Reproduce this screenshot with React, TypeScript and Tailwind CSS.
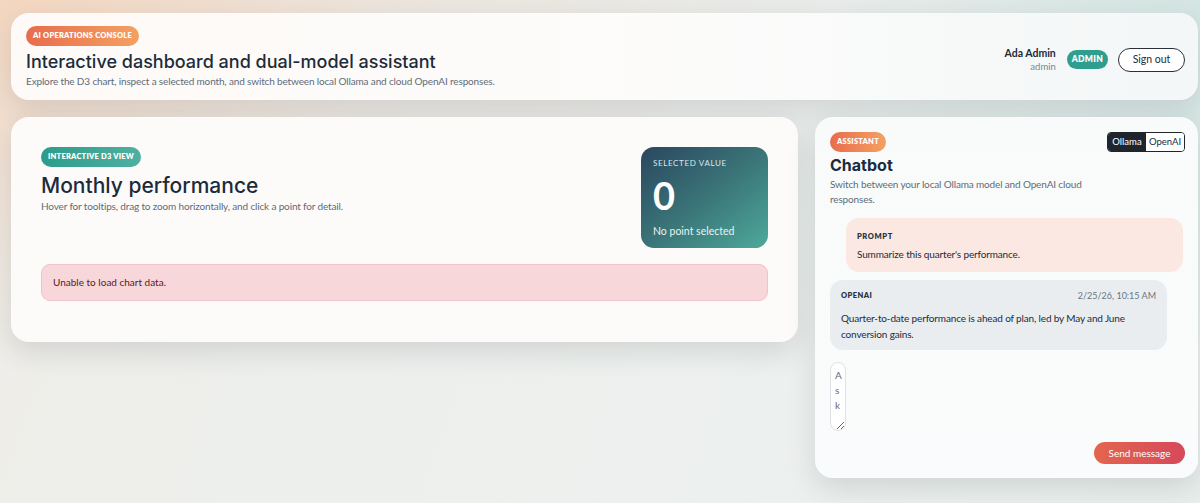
const heading = "font-['Inter',_'DejaVu_Sans',_sans-serif]";
const body = "font-['Lato',_'Noto_Sans',_sans-serif]";

const Badge = ({ label, tone }: { label: string; tone: "orange" | "teal" }) => (
  <div className="flex">
    <span
      className={`inline-flex h-5 items-center rounded-full px-[7px] text-[7.5px] font-extrabold uppercase tracking-[0.03em] text-white ${body} ${
        tone === "orange"
          ? "bg-gradient-to-r from-[#e86c4d] to-[#f4a062]"
          : "bg-gradient-to-r from-[#2b9c8c] to-[#4fb0a0]"
      }`}>
      {label}
    </span>
  </div>
);

const Header = () => (
  <header className="flex h-[87px] items-start justify-between rounded-[18px] bg-gradient-to-r from-[#fdfaf7] via-[#fdfcfb] to-[#f3f7f7] pl-[15px] pr-[13px] pt-[13px] shadow-[0_10px_28px_rgba(40,50,60,0.13)]">
    <div className="flex flex-col">
      <Badge label="AI Operations Console" tone="orange" />
      <h1 className={`mt-[4px] text-[18px] font-medium leading-[24px] text-[#1c2b3b] ${heading}`}>
        Interactive dashboard and dual-model assistant
      </h1>
      <p className={`text-[10px] leading-[14px] tracking-[-0.015em] text-[#5f6b78] ${body}`}>
        Explore the D3 chart, inspect a selected month, and switch between local Ollama and cloud OpenAI responses.
      </p>
    </div>
    <div className={`mt-[20px] flex items-center ${body}`}>
      <div className="flex flex-col items-end">
        <span className="text-[10.5px] font-bold leading-[14px] text-[#1c2b3b]">Ada Admin</span>
        <span className="text-[9.5px] leading-[13px] text-[#7b8590]">admin</span>
      </div>
      <span className="ml-[11px] inline-flex h-[19px] items-center rounded-full bg-[#2f9e8e] px-[5px] text-[8.5px] font-extrabold tracking-[0.03em] text-white">
        ADMIN
      </span>
      <button className="ml-[10px] h-6 w-[67px] rounded-full border border-[#2a3038] bg-white text-[10.5px] text-[#1c2b3b]">
        Sign out
      </button>
    </div>
  </header>
);

const ChartCard = () => (
  <section className="h-[225px] w-[787px] shrink-0 rounded-[18px] bg-[#fcfbfa] px-[30px] pt-[30px] shadow-[0_10px_28px_rgba(40,50,60,0.14)]">
    <div className="flex justify-between">
      <div className="flex flex-col">
        <Badge label="Interactive D3 view" tone="teal" />
        <h2 className={`mt-[7px] text-[21px] font-medium leading-[24px] text-[#1c2b3b] ${heading}`}>
          Monthly performance
        </h2>
        <p className={`mt-[1px] text-[10px] leading-[14px] tracking-[-0.015em] text-[#5f6b78] ${body}`}>
          Hover for tooltips, drag to zoom horizontally, and click a point for detail.
        </p>
      </div>
      <div className={`h-[101px] w-[127px] rounded-[13px] bg-gradient-to-br from-[#2a475f] via-[#3a7478] to-[#4daa9a] px-3 pt-[10px] text-white ${body}`}>
        <div className="text-[8px] uppercase leading-[12px] tracking-[0.08em] text-[#dbe8ec]">Selected value</div>
        <div className="mt-[6px] text-[38px] font-bold leading-[40px]">0</div>
        <div className="mt-[9px] text-[10.5px] leading-[14px] text-[#e8f3f2]">No point selected</div>
      </div>
    </div>
    <div className={`mt-[16px] flex h-[37px] items-center rounded-[9px] border border-[#efc3c9] bg-[#f8d7da] px-[11px] text-[10px] text-[#5c1624] ${body}`}>
      Unable to load chart data.
    </div>
  </section>
);

const ChatCard = () => (
  <section className={`flex h-[361px] w-[383px] shrink-0 flex-col rounded-[18px] bg-gradient-to-b from-[#f9fbfb] to-[#fafbfc] pl-[15px] pr-[13px] pt-[15px] shadow-[0_10px_28px_rgba(40,50,60,0.14)] ${body}`}>
    <div className="flex items-start justify-between">
      <div className="flex flex-col">
        <Badge label="Assistant" tone="orange" />
        <h2 className={`mt-[3px] text-[16px] font-bold leading-[20px] text-[#1c2b3b] ${heading}`}>Chatbot</h2>
        <p className="mt-[2px] w-[262px] text-[10px] leading-[15px] tracking-[-0.015em] text-[#5f6b78]">
          Switch between your local Ollama model and OpenAI cloud responses.
        </p>
      </div>
      <div className="flex h-5 overflow-hidden rounded-[4px] border border-[#1f252d] text-[9.5px]">
        <button className="w-[38px] bg-[#1f252d] text-white">Ollama</button>
        <button className="w-[38px] bg-white text-[#1c2b3b]">OpenAI</button>
      </div>
    </div>

    <div className="ml-4 mr-[2px] mt-[11px] rounded-[13px] bg-[#fbe8e2] px-[11px] pb-[11px] pt-[15px]">
      <div className="text-[7.5px] font-extrabold leading-[8px] tracking-[0.08em] text-[#2a3440]">PROMPT</div>
      <div className="mt-[6px] text-[10px] leading-[14px] tracking-[-0.015em] text-[#1c2b3b]">
        Summarize this quarter's performance.
      </div>
    </div>

    <div className="mr-[18px] mt-[8px] rounded-[13px] bg-[#e9edf0] px-[11px] pb-[8px] pt-[12px]">
      <div className="flex items-center justify-between leading-[8px]">
        <span className="text-[7.5px] font-extrabold tracking-[0.06em] text-[#2a3440]">OPENAI</span>
        <span className="text-[9px] text-[#6b7580]">2/25/26, 10:15 AM</span>
      </div>
      <p className="mt-[10px] text-[10px] leading-[16px] tracking-[-0.015em] text-[#1c2b3b]">
        Quarter-to-date performance is ahead of plan, led by May and June conversion gains.
      </p>
    </div>

    <textarea
      placeholder="Ask"
      className="mt-[12px] h-[69px] w-4 rounded-[8px] border border-[#dfe3e7] bg-white px-[4px] py-[5px] text-[10px] leading-[15px] placeholder:text-[#5f6b78]"
    />

    <div className="mt-[11px] flex justify-end">
      <button className="h-[22px] w-[91px] rounded-full bg-gradient-to-r from-[#e3654d] to-[#d6485b] text-[10px] text-white">
        Send message
      </button>
    </div>
  </section>
);

export default function App() {
  return (
    <div className="min-h-screen bg-[linear-gradient(110deg,#f4d6bf_0%,#ece6df_30%,#e9ecea_60%,#c9e2df_100%)]">
      <div className="min-h-screen bg-[linear-gradient(180deg,rgba(240,241,238,0)_0%,rgba(238,241,239,0.85)_70%)] pl-[11px] pr-[2px] pt-[13px]">
        <Header />
        <div className="mt-[17px] flex items-start gap-[17px]">
          <ChartCard />
          <ChatCard />
        </div>
      </div>
    </div>
  );
}
